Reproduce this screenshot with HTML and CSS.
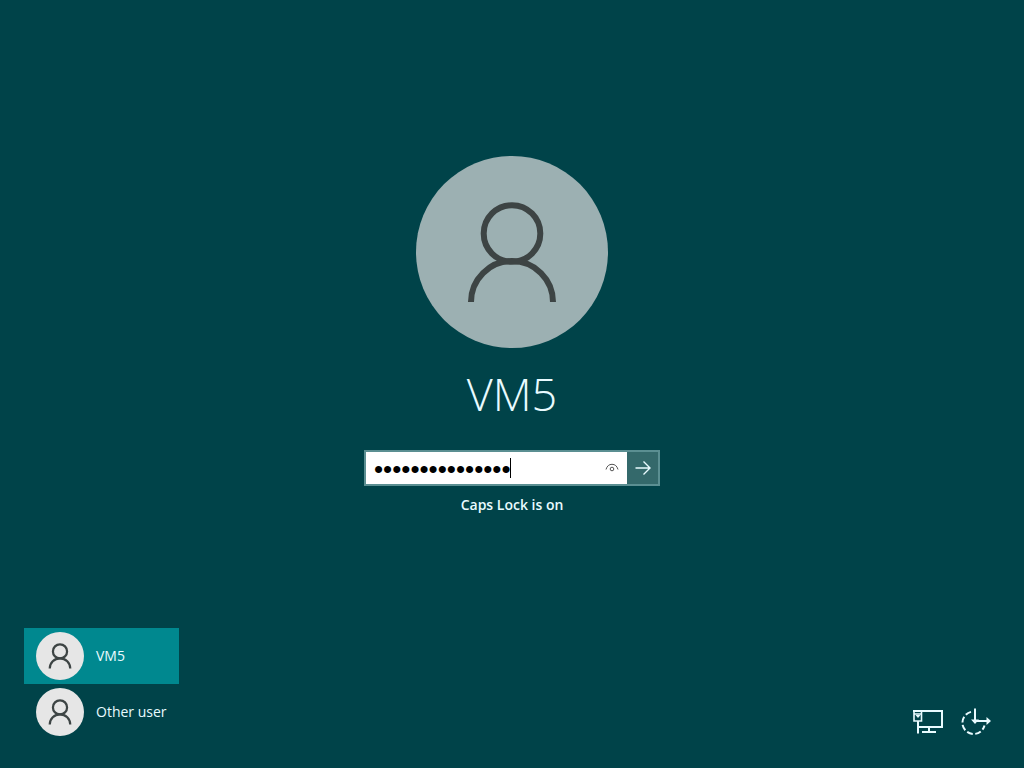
FILE: index.html
```html
<!DOCTYPE html>
<html lang="en">
<head>
<meta charset="utf-8">
<meta name="viewport" content="width=device-width, initial-scale=1">
<title>Sign in</title>
<link rel="stylesheet" href="styles.css">
</head>
<body>
<svg class="defs" aria-hidden="true">
  <symbol id="person" viewBox="0 0 192 192">
    <circle cx="96" cy="77.5" r="28.3"/>
    <path d="M55 146a41 41 0 0 1 82 0"/>
  </symbol>
</svg>
<main class="login">
  <div class="avatar avatar-large"><svg aria-hidden="true"><use href="#person"/></svg></div>
  <h1 class="name">VM5</h1>
  <form class="password-form">
    <div class="field">
      <input class="password" type="password" aria-label="Password" value="abcdefghijklmno">
      <span class="caret"></span>
      <button class="reveal" type="button" aria-label="Show password">
        <svg width="14" height="10" viewBox="0 0 14 10" aria-hidden="true"><path d="M1 6.5C2 3 4 1.3 7 1.3S12 3 13 6.5"/><circle cx="7" cy="6" r="1.8"/></svg>
      </button>
    </div>
    <button class="submit" type="submit" aria-label="Submit">
      <svg width="16" height="16" viewBox="0 0 16 16" aria-hidden="true"><path d="M0.5 8H15M8.5 1.5L15 8L8.5 14.5"/></svg>
    </button>
  </form>
  <p class="hint">Caps Lock is on</p>
</main>
<footer class="bottom">
  <nav class="users" aria-label="Users">
    <button class="user user-active" type="button"><span class="avatar avatar-small"><svg aria-hidden="true"><use href="#person"/></svg></span>VM5</button>
    <button class="user" type="button"><span class="avatar avatar-small"><svg aria-hidden="true"><use href="#person"/></svg></span>Other user</button>
  </nav>
  <div class="tools">
    <button class="tool" type="button" aria-label="Network">
      <svg width="32" height="28" viewBox="0 0 32 28" aria-hidden="true">
        <path d="M1 3H30V19H6M6 13V25.5M17 19V24M10 24H24"/>
        <path class="thin" d="M2 3V13H9.5V3M2 6H9.5"/>
        <path class="solid" d="M3.5 7H8.5L6 10Z"/>
      </svg>
    </button>
    <button class="tool" type="button" aria-label="Ease of access">
      <svg width="32" height="28" viewBox="0 0 32 28" aria-hidden="true">
        <path class="dashes" d="M11 3.9A11.2 11.2 0 1 0 24.5 17.5"/>
        <path d="M15 0.5V13M13 13H28"/>
        <path class="solid" d="M11 11.5H19L15 16ZM26.5 9L31 13L26.5 17Z"/>
      </svg>
    </button>
  </div>
</footer>
</body>
</html>
```

FILE: styles.css
```css
* { box-sizing: border-box; }

body {
  margin: 0;
  min-height: 100vh;
  display: flex;
  flex-direction: column;
  justify-content: space-between;
  background: #004349;
  color: #e9fbff;
  font-family: "Open Sans", "Noto Sans", sans-serif;
  font-size: 14px;
  line-height: 20px;
}

button {
  margin: 0;
  padding: 0;
  border: 0;
  background: none;
  color: inherit;
  font: inherit;
}

svg { display: block; fill: none; stroke: currentColor; }

.defs { position: absolute; width: 0; height: 0; }

.login {
  display: flex;
  flex-direction: column;
  align-items: center;
  padding-top: 156px;
}

.avatar { border-radius: 50%; color: #3d4444; flex: none; }
.avatar svg { width: 100%; height: 100%; }
.avatar-large { width: 192px; height: 192px; background: #9cb0b2; stroke-width: 6; }
.avatar-small { width: 48px; height: 48px; background: #e6e6e6; stroke-width: 9; }

.name {
  margin: 14px 0 24px;
  font-size: 45px;
  font-weight: 300;
  line-height: 64px;
}

.password-form {
  display: flex;
  width: 296px;
  height: 36px;
  border: 2px solid #5b8f92;
}

.field { position: relative; display: flex; flex: 1; min-width: 0; background: #fff; }

.password {
  flex: 1;
  min-width: 0;
  padding: 2px 0 0 8px;
  border: 0;
  outline: 0;
  background: none;
  color: #000;
  caret-color: transparent;
  font-family: "Liberation Sans", Arial, sans-serif;
  font-size: 26px;
}

.caret { position: absolute; left: 144px; top: 6px; width: 1px; height: 20px; background: #000; }

.reveal { display: flex; align-items: center; justify-content: center; flex: none; width: 30px; color: #555; }

.submit {
  display: flex;
  align-items: center;
  justify-content: center;
  flex: none;
  width: 31px;
  background: #34696b;
  stroke-width: 1.4;
}

.hint { margin: 9px 0 0; font-weight: 600; }

.bottom {
  display: flex;
  justify-content: space-between;
  align-items: flex-end;
  padding: 0 32px 28px 24px;
}

.users { display: flex; flex-direction: column; }

.user {
  display: flex;
  align-items: center;
  gap: 12px;
  padding: 4px 12px;
  text-align: left;
}

.user-active { background: #00888f; }

.tools { display: flex; gap: 16px; padding-bottom: 4px; }
.tool svg { stroke-width: 2; }
.tool .thin { stroke-width: 1.6; }
.tool .dashes { stroke-dasharray: 6 2.5; }
.tool .solid { fill: currentColor; stroke: none; }
```
